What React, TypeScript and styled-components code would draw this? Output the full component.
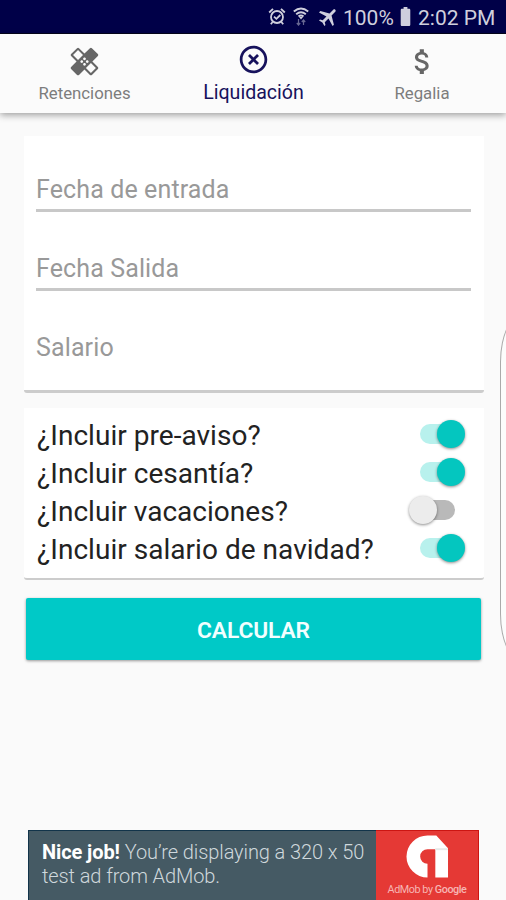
import React from "react";
import styled, { createGlobalStyle } from "styled-components";
import { MdHealing, MdHighlightOff, MdAttachMoney, MdBatteryFull, MdAirplanemodeActive } from "react-icons/md";

const GlobalStyle = createGlobalStyle`
  * { box-sizing: border-box; }
  body { margin: 0; background: #fafafa; font-family: Roboto, "Liberation Sans", sans-serif; overflow: hidden; }
`;

const Screen = styled.div`
  position: relative;
  width: 506px;
  height: 900px;
  display: flex;
  flex-direction: column;
  background: #fafafa;
  overflow: hidden;
`;

const StatusBar = styled.header`
  height: 34px;
  flex: none;
  display: flex;
  align-items: center;
  justify-content: flex-end;
  padding-right: 10px;
  background: #000048;
  border-bottom: 1px solid #05051c;
  color: #cfcfdd;
  svg { display: block; flex: none; }
`;

const StatusText = styled.span<{ $width: number; $gap?: number }>`
  width: ${(p) => p.$width}px;
  margin-left: ${(p) => p.$gap ?? 0}px;
  font-size: 21px;
  line-height: 33px;
  padding-top: 3px;
  white-space: nowrap;
`;

const SignalIcons = styled.div`
  display: flex;
  align-items: center;
  gap: 7px;
  margin-right: 8px;
`;

const Plane = styled(MdAirplanemodeActive)`
  transform: rotate(45deg);
  margin-right: 3px;
`;

const Battery = styled(MdBatteryFull)`
  margin: 0 -5px 0 -5px;
`;

const Tabs = styled.nav`
  height: 79px;
  flex: none;
  display: grid;
  grid-template-columns: 169px 169px 168px;
  background: #fbfbfb;
  box-shadow: 0 2px 7px rgba(0, 0, 0, 0.38);
`;

const Tab = styled.div<{ $active?: boolean }>`
  display: flex;
  flex-direction: column;
  align-items: center;
  padding-top: ${(p) => (p.$active ? 9 : 11)}px;
  color: ${(p) => (p.$active ? "#17125c" : "#666")};
  svg { display: block; }
`;

const TabLabel = styled.span<{ $active?: boolean }>`
  margin-top: ${(p) => (p.$active ? 5 : 3)}px;
  font-size: ${(p) => (p.$active ? 19.6 : 16.8)}px;
  line-height: 24px;
  color: ${(p) => (p.$active ? "#17125c" : "#7d7d7d")};
`;

const Content = styled.main`
  flex: 1;
  display: flex;
  flex-direction: column;
  padding: 23px 22px 0 24px;
`;

const Card = styled.section<{ $height: number }>`
  height: ${(p) => p.$height}px;
  background: #fff;
  border-bottom: 3px solid #ccc;
  border-radius: 0 0 3px 3px;
  padding: 0 13px 0 12px;
`;

const FormCard = styled(Card)`
  margin-bottom: 15px;
`;

const SwitchCard = styled(Card)`
  padding: 8px 17px 0 13px;
  border-bottom-width: 2px;
`;

const Field = styled.div<{ $line?: boolean }>`
  height: 79px;
  display: flex;
  align-items: flex-end;
  padding-bottom: 5px;
  border-bottom: 3px solid ${(p) => (p.$line ? "#c8c8c8" : "transparent")};
  font-size: 25px;
  line-height: 28px;
  letter-spacing: 0.12px;
  color: #999;
  &:first-child { height: 76px; }
`;

const Option = styled.div`
  height: 38px;
  display: flex;
  align-items: center;
  justify-content: space-between;
  font-size: 28px;
  color: #222;
`;

const OptionLabel = styled.span`
  white-space: nowrap;
  letter-spacing: 0.03px;
`;

const Track = styled.span<{ $on: boolean }>`
  position: relative;
  width: 35px;
  height: 20px;
  margin-right: 12px;
  margin-top: -3px;
  border-radius: 10px;
  background: ${(p) => (p.$on ? "#b8f1ed" : "#b9b9b9")};
  &::after {
    content: "";
    position: absolute;
    top: -4px;
    left: ${(p) => (p.$on ? 17 : -11)}px;
    width: 28px;
    height: 28px;
    border-radius: 50%;
    background: ${(p) => (p.$on ? "#04c6bf" : "#ececec")};
    box-shadow: 0 1px 3px rgba(0, 0, 0, 0.45);
  }
`;

const Calculate = styled.button`
  margin: 18px 3px 0 2px;
  height: 62px;
  padding: 2px 0 0;
  border: 0;
  border-radius: 2px;
  background: #00c9c7;
  box-shadow: 0 1px 3px rgba(0, 0, 0, 0.4);
  color: #f2ffff;
  font: 600 22.8px Roboto, sans-serif;
  letter-spacing: -0.1px;
`;

const Ad = styled.aside`
  width: 451px;
  height: 70px;
  margin-left: 28px;
  flex: none;
  display: flex;
  background: #455a64;
`;

const AdCopy = styled.p`
  margin: 0;
  width: 348px;
  padding: 9px 0 0 13px;
  border: solid #12344a;
  border-width: 1px 0 0 1px;
  font-size: 20px;
  line-height: 24px;
  font-weight: 300;
  letter-spacing: -0.1px;
  color: #cfd8dc;
  white-space: nowrap;
  b { font-weight: 700; color: #fff; }
`;

const AdBrand = styled.div`
  width: 103px;
  display: flex;
  flex-direction: column;
  align-items: center;
  background: #e53935;
  border: solid #cc1512;
  border-width: 1px 1px 0 0;
  padding-top: 4px;
  font-size: 10.8px;
  line-height: 15px;
  letter-spacing: -0.45px;
  color: #f7b5b3;
  white-space: nowrap;
  svg { display: block; margin-bottom: 4px; }
  b { font-weight: 500; }
`;

const EdgeHandle = styled.div`
  position: absolute;
  left: 500px;
  top: 312px;
  width: 50px;
  height: 352px;
  border: 1px solid #aaa;
  border-radius: 25px / 50px;
  background: #fcfcfc;
`;

const AlarmIcon = () => (
  <svg width="18" height="19" viewBox="0 0 18 19" fill="none" stroke="currentColor" strokeWidth="1.8">
    <circle cx="9" cy="10" r="6" />
    <path d="M1.2 5.5 5 1.8M16.8 5.5 13 1.8M4.6 15l-1.8 2.3M13.4 15l1.8 2.3M6 9.6l2.4 2.2L12.3 8" />
  </svg>
);

const WifiIcon = () => (
  <svg width="16" height="19" viewBox="0 0 16 19" fill="none" stroke="currentColor" strokeWidth="1.9">
    <path d="M.8 4.5Q8-1.4 15.2 4.5M3.2 7.2Q8 3.2 12.8 7.2M5.5 9.6Q8 7.5 10.5 9.6" />
    <path d="m6 10 2 2.4 2-2.4z" fill="currentColor" stroke="none" />
    <path d="M5.5 12v6M3.8 16l1.7 2 1.7-2M10.5 18v-5M8.8 15l1.7-2 1.7 2" strokeWidth="1.2" opacity=".5" />
  </svg>
);

const AdMobLogo = () => (
  <svg width="43" height="43" viewBox="0 0 44 43">
    <path fill="#fff" d="M22 0h9l12 13v30H30V14H22a7.5 7.5 0 0 0 0 15v14A21.5 21.5 0 0 1 22 0Z" />
    <path fill="#e8eaea" d="M30 13h13v2H30z" />
  </svg>
);

const options = [
  { label: "¿Incluir pre-aviso?", on: true },
  { label: "¿Incluir cesantía?", on: true },
  { label: "¿Incluir vacaciones?", on: false },
  { label: "¿Incluir salario de navidad?", on: true },
];

export default function App() {
  return (
    <>
      <GlobalStyle />
      <Screen>
        <StatusBar>
          <SignalIcons>
            <AlarmIcon />
            <WifiIcon />
          </SignalIcons>
          <Plane size={23} />
          <StatusText $width={56}>100%</StatusText>
          <Battery size={23} />
          <StatusText $width={78} $gap={6}>2:02 PM</StatusText>
        </StatusBar>
        <Tabs>
          <Tab><MdHealing size={33} /><TabLabel>Retenciones</TabLabel></Tab>
          <Tab $active><MdHighlightOff size={33} /><TabLabel $active>Liquidación</TabLabel></Tab>
          <Tab><MdAttachMoney size={33} /><TabLabel>Regalia</TabLabel></Tab>
        </Tabs>
        <Content>
          <FormCard $height={257}>
            <Field $line>Fecha de entrada</Field>
            <Field $line>Fecha Salida</Field>
            <Field>Salario</Field>
          </FormCard>
          <SwitchCard $height={172}>
            {options.map((o) => (
              <Option key={o.label}>
                <OptionLabel>{o.label}</OptionLabel>
                <Track $on={o.on} role="switch" aria-checked={o.on} />
              </Option>
            ))}
          </SwitchCard>
          <Calculate>CALCULAR</Calculate>
        </Content>
        <Ad>
          <AdCopy><b>Nice job!</b> You’re displaying a 320 x 50<br />test ad from AdMob.</AdCopy>
          <AdBrand><AdMobLogo /><span>AdMob by <b>Google</b></span></AdBrand>
        </Ad>
        <EdgeHandle />
      </Screen>
    </>
  );
}
